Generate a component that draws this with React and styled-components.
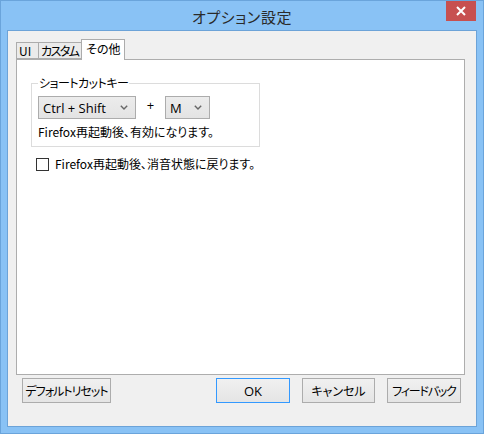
import React from 'react';
import styled, { createGlobalStyle } from 'styled-components';

const GlobalStyle = createGlobalStyle`
	html, body {
		margin: 0;
		padding: 0;
		background: #89c2f5;
	}
	body {
		font-family: 'Noto Sans CJK JP', sans-serif;
		font-size: 12px;
		line-height: 16px;
		font-feature-settings: 'palt';
		color: #000;
	}
`;

const Window = styled.div`
	position: relative;
	box-sizing: border-box;
	width: 484px;
	height: 434px;
	border: 1px solid #6aa4db;
	background: #89c2f5;
	padding: 0 6px 6px 6px;
	display: flex;
	flex-direction: column;
`;

const TitleBar = styled.div`
	height: 29px;
	display: flex;
	justify-content: center;
	align-items: center;
	padding-top: 2px;
	box-sizing: border-box;
`;

const Title = styled.span`
	font-size: 15px;
	line-height: 20px;
	letter-spacing: 0.6px;
	color: #2a2a2a;
`;

const CloseButton = styled.div`
	position: absolute;
	top: 0;
	right: 7px;
	width: 30px;
	height: 20px;
	background: #c75050;
	display: flex;
	align-items: center;
	justify-content: center;
`;

const Client = styled.div`
	flex: 1;
	border: 1px solid #6ca3d8;
	background: #f0f0f0;
	padding: 8px 11px 0 8px;
	display: flex;
	flex-direction: column;
`;

const TabRow = styled.div`
	height: 21px;
	display: flex;
	align-items: flex-end;
	margin-bottom: -1px;
`;

const Tab = styled.div`
	position: relative;
	box-sizing: border-box;
	width: ${(p) => p.$width}px;
	height: ${(p) => (p.$active ? 21 : 17)}px;
	margin-bottom: ${(p) => (p.$active ? 0 : 1)}px;
	margin-left: ${(p) => (p.$first ? 0 : -1)}px;
	border: 1px solid #acacac;
	border-bottom: ${(p) => (p.$active ? 'none' : '1px solid #acacac')};
	background: ${(p) => (p.$active ? '#fff' : '#ebebeb')};
	z-index: ${(p) => (p.$active ? 1 : 0)};
	display: flex;
	align-items: ${(p) => (p.$active ? 'flex-start' : 'center')};
	padding: ${(p) => (p.$active ? '1px 0 0 4px' : '0 0 0 2px')};
	letter-spacing: ${(p) => p.$spacing || 0}px;
	white-space: nowrap;
	overflow: hidden;
`;

const Panel = styled.div`
	box-sizing: border-box;
	height: 316px;
	border: 1px solid #adadad;
	background: #fff;
	padding: 15px 0 0 14px;
`;

const Group = styled.fieldset`
	box-sizing: border-box;
	width: 229px;
	margin: 0;
	border: 1px solid #dcdcdc;
	padding: 5px 6px 6px 6px;
`;

const Legend = styled.legend`
	padding: 0 1px;
	line-height: 16px;
	letter-spacing: -0.5px;
`;

const KeyRow = styled.div`
	display: flex;
	align-items: flex-start;
`;

const Select = styled.div`
	box-sizing: border-box;
	width: ${(p) => p.$width}px;
	height: 23px;
	border: 1px solid #acacac;
	background: linear-gradient(#ececec, #e3e3e3);
	display: flex;
	align-items: center;
	justify-content: space-between;
	padding: 0 7px 0 4px;
	font-family: 'Open Sans', sans-serif;
	font-size: 13px;
	white-space: nowrap;
`;

const Plus = styled.span`
	width: 29px;
	text-align: center;
	margin-top: 1px;
	line-height: 16px;
	font-family: 'Open Sans', sans-serif;
	font-size: 13px;
`;

const Hint = styled.div`
	margin-top: 5px;
	white-space: nowrap;
`;

const CheckRow = styled.label`
	display: flex;
	align-items: center;
	gap: 6px;
	margin: 9px 0 0 5px;
	height: 16px;
	white-space: nowrap;
`;

const CheckBox = styled.span`
	box-sizing: border-box;
	width: 13px;
	height: 13px;
	border: 1px solid #333;
	background: #fff;
`;

const Footer = styled.div`
	display: flex;
	margin-top: 3px;
	padding: 0 4px 0 6px;
	gap: 12px;
`;

const Button = styled.div`
	box-sizing: border-box;
	width: ${(p) => p.$width}px;
	height: 25px;
	border: 1px solid ${(p) => (p.$default ? '#3399ff' : '#acacac')};
	background: linear-gradient(#f0f0f0, #e5e5e5);
	display: flex;
	align-items: center;
	justify-content: center;
	margin-left: ${(p) => (p.$push ? 'auto' : '0')};
	letter-spacing: ${(p) => p.$spacing || 0}px;
	white-space: nowrap;
`;

const Latin = styled.span`
	font-family: 'Open Sans', sans-serif;
	font-size: 13px;
`;

const Chevron = () => (
	<svg width='8' height='5' viewBox='0 0 8 5'>
		<polyline points='0.8,0.8 4,4 7.2,0.8' fill='none' stroke='#666' strokeWidth='1.4' />
	</svg>
);

const App = () => {
	return (
		<>
			<GlobalStyle />
			<Window>
				<TitleBar>
					<Title>オプション設定</Title>
				</TitleBar>
				<CloseButton>
					<svg width='10' height='10' viewBox='0 0 10 10'>
						<path d='M1 1 L9 9 M9 1 L1 9' stroke='#fff' strokeWidth='2' />
					</svg>
				</CloseButton>
				<Client>
					<TabRow>
						<Tab $first $width={23}>
							UI
						</Tab>
						<Tab $width={44} $spacing={-1.6}>
							カスタム
						</Tab>
						<Tab $active $width={44}>
							その他
						</Tab>
					</TabRow>
					<Panel>
						<Group>
							<Legend>ショートカットキー</Legend>
							<KeyRow>
								<Select $width={98}>
									Ctrl + Shift
									<Chevron />
								</Select>
								<Plus>+</Plus>
								<Select $width={45}>
									M
									<Chevron />
								</Select>
							</KeyRow>
							<Hint>Firefox再起動後、有効になります。</Hint>
						</Group>
						<CheckRow>
							<CheckBox />
							Firefox再起動後、消音状態に戻ります。
						</CheckRow>
					</Panel>
					<Footer>
						<Button $width={89} $spacing={-1}>
							デフォルトリセット
						</Button>
						<Button $width={74} $default $push>
							<Latin>OK</Latin>
						</Button>
						<Button $width={73}>キャンセル</Button>
						<Button $width={74} $spacing={-1.2}>
							フィードバック
						</Button>
					</Footer>
				</Client>
			</Window>
		</>
	);
};

export default App;
